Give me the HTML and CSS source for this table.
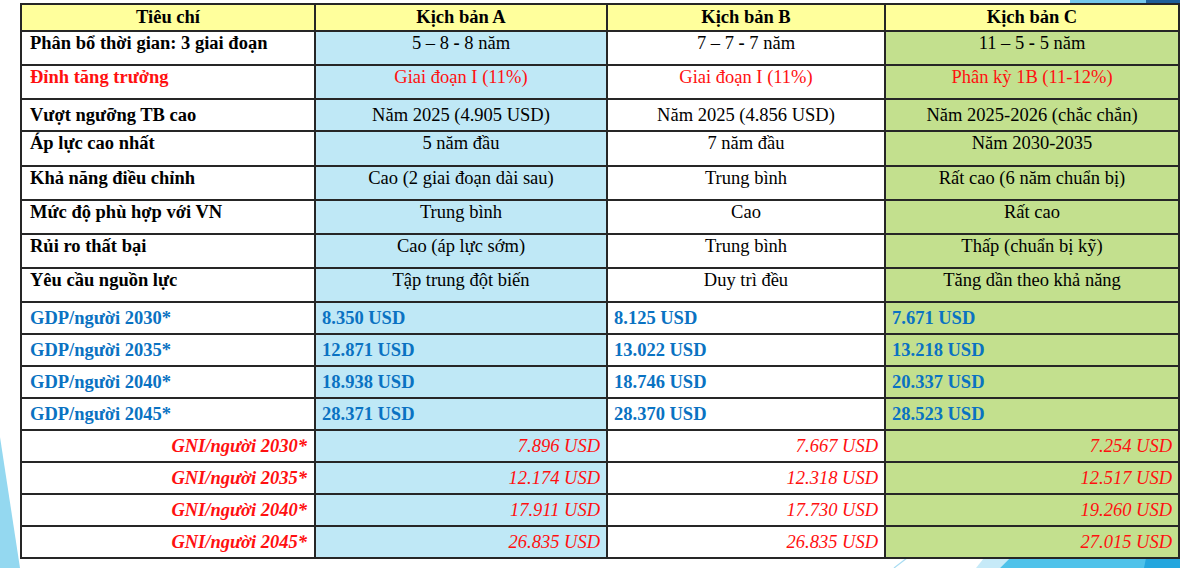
FILE: index.html
```html
<!DOCTYPE html>
<html lang="vi">
<head>
<meta charset="utf-8">
<title>So sánh kịch bản</title>
<link rel="stylesheet" href="styles.css">
</head>
<body>
<svg class="deco" width="1180" height="568" viewBox="0 0 1180 568" aria-hidden="true">
  <polygon points="0,437 20,568 0,568" fill="#94d8f0"/>
  <polygon points="1070,0 1146,0 1146,4 1070,4" fill="#74c8ec"/>
  <polygon points="1146,0 1180,0 1180,30 1178,30 1178,4 1146,4" fill="#1f5f99"/>
  <polygon points="976,568 984,558 1010,558 1000,568" fill="#c6eaf8"/>
  <polygon points="1000,568 1010,558 1180,558 1180,568" fill="#4fc2ea"/>
  <polygon points="1144,568 1146,558 1180,558 1180,568" fill="#24a6de"/>
  <line x1="894" y1="568" x2="907" y2="558" stroke="#a8dcf2" stroke-width="1.2"/>
</svg>
<main class="page">
<table class="grid">
  <colgroup>
    <col class="c0"><col class="c1"><col class="c2"><col class="c3">
  </colgroup>
  <thead>
    <tr class="h-head">
      <th>Tiêu chí</th><th>Kịch bản A</th><th>Kịch bản B</th><th>Kịch bản C</th>
    </tr>
  </thead>
  <tbody>
    <tr class="h34">
      <td class="lbl">Phân bổ thời gian: 3 giai đoạn</td>
      <td class="a">5 – 8 <b>-</b> 8 năm</td><td class="b">7 – 7 <b>-</b> 7 năm</td><td class="c">11 – 5 <b>-</b> 5 năm</td>
    </tr>
    <tr class="h34 red">
      <td class="lbl">Đỉnh tăng trưởng</td>
      <td class="a">Giai đoạn I (11%)</td><td class="b">Giai đoạn I (11%)</td><td class="c">Phân kỳ 1B (11-12%)</td>
    </tr>
    <tr class="h32 mid">
      <td class="lbl">Vượt ngưỡng TB cao</td>
      <td class="a">Năm 2025 (4.905 USD)</td><td class="b">Năm 2025 (4.856 USD)</td><td class="c">Năm 2025-2026 (chắc chắn)</td>
    </tr>
    <tr class="h35">
      <td class="lbl">Áp lực cao nhất</td>
      <td class="a">5 năm đầu</td><td class="b">7 năm đầu</td><td class="c">Năm 2030-2035</td>
    </tr>
    <tr class="h34">
      <td class="lbl">Khả năng điều chỉnh</td>
      <td class="a">Cao (2 giai đoạn dài sau)</td><td class="b">Trung bình</td><td class="c">Rất cao (6 năm chuẩn bị)</td>
    </tr>
    <tr class="h34">
      <td class="lbl">Mức độ phù hợp với VN</td>
      <td class="a">Trung bình</td><td class="b">Cao</td><td class="c">Rất cao</td>
    </tr>
    <tr class="h34">
      <td class="lbl">Rủi ro thất bại</td>
      <td class="a">Cao (áp lực sớm)</td><td class="b">Trung bình</td><td class="c">Thấp (chuẩn bị kỹ)</td>
    </tr>
    <tr class="h34">
      <td class="lbl">Yêu cầu nguồn lực</td>
      <td class="a">Tập trung đột biến</td><td class="b">Duy trì đều</td><td class="c">Tăng dần theo khả năng</td>
    </tr>
    <tr class="h32 gdp">
      <td class="lbl">GDP/người 2030*</td>
      <td class="a">8.350 USD</td><td class="b">8.125 USD</td><td class="c">7.671 USD</td>
    </tr>
    <tr class="h32 gdp">
      <td class="lbl">GDP/người 2035*</td>
      <td class="a">12.871 USD</td><td class="b">13.022 USD</td><td class="c">13.218 USD</td>
    </tr>
    <tr class="h32 gdp">
      <td class="lbl">GDP/người 2040*</td>
      <td class="a">18.938 USD</td><td class="b">18.746 USD</td><td class="c">20.337 USD</td>
    </tr>
    <tr class="h32 gdp">
      <td class="lbl">GDP/người 2045*</td>
      <td class="a">28.371 USD</td><td class="b">28.370 USD</td><td class="c">28.523 USD</td>
    </tr>
    <tr class="h32 gni">
      <td class="lbl">GNI/người 2030*</td>
      <td class="a">7.896 USD</td><td class="b">7.667 USD</td><td class="c">7.254 USD</td>
    </tr>
    <tr class="h32 gni">
      <td class="lbl">GNI/người 2035*</td>
      <td class="a">12.174 USD</td><td class="b">12.318 USD</td><td class="c">12.517 USD</td>
    </tr>
    <tr class="h32 gni">
      <td class="lbl">GNI/người 2040*</td>
      <td class="a">17.911 USD</td><td class="b">17.730 USD</td><td class="c">19.260 USD</td>
    </tr>
    <tr class="h32 gni">
      <td class="lbl">GNI/người 2045*</td>
      <td class="a">26.835 USD</td><td class="b">26.835 USD</td><td class="c">27.015 USD</td>
    </tr>
  </tbody>
</table>
</main>
</body>
</html>
```

FILE: styles.css
```css
html, body {
  margin: 0;
  padding: 0;
  background: #ffffff;
  width: 1180px;
  height: 568px;
  overflow: hidden;
}

body {
  position: relative;
  font-family: "Liberation Serif", "Times New Roman", serif;
  color: #000;
}

.deco {
  position: absolute;
  left: 0;
  top: 0;
  z-index: 0;
}

.page {
  position: relative;
  z-index: 1;
  padding: 3px 0 0 20px;
}

.grid {
  border-collapse: collapse;
  table-layout: fixed;
  width: 1158px;
  font-size: 18.5px;
  line-height: 21px;
}

.c0 { width: 294px; }
.c1 { width: 292px; }
.c2 { width: 278px; }
.c3 { width: 294px; }

.grid th,
.grid td {
  border: 2px solid #262626;
  padding: 0 6px;
  vertical-align: top;
  white-space: nowrap;
  overflow: hidden;
}

.grid th {
  background: #ffff9c;
  font-weight: bold;
  text-align: center;
  vertical-align: middle;
  height: 25px;
  padding-top: 0;
}

.grid td {
  text-align: center;
  padding-top: 1px;
}

.grid td.lbl {
  text-align: left;
  font-weight: bold;
  padding-left: 8px;
}

.grid td.a { background: #bfe8f6; }
.grid td.b { background: #ffffff; }
.grid td.c { background: #c3e08e; }

.h34 td { height: 31px; }
.h35 td { height: 32px; }
.h32 td { height: 30px; }

.red td { color: #ff1010; }
.red td.lbl { color: #ff1010; }

.mid td {
  vertical-align: middle;
  padding-top: 0;
}

.gdp td {
  vertical-align: middle;
  padding-top: 0;
  font-weight: bold;
  color: #0a72c2;
  text-align: left;
}

.gni td {
  vertical-align: middle;
  padding-top: 0;
  font-style: italic;
  color: #ff1010;
  text-align: right;
}

.gni td.lbl {
  text-align: right;
  font-weight: bold;
  padding-right: 7px;
}
```
